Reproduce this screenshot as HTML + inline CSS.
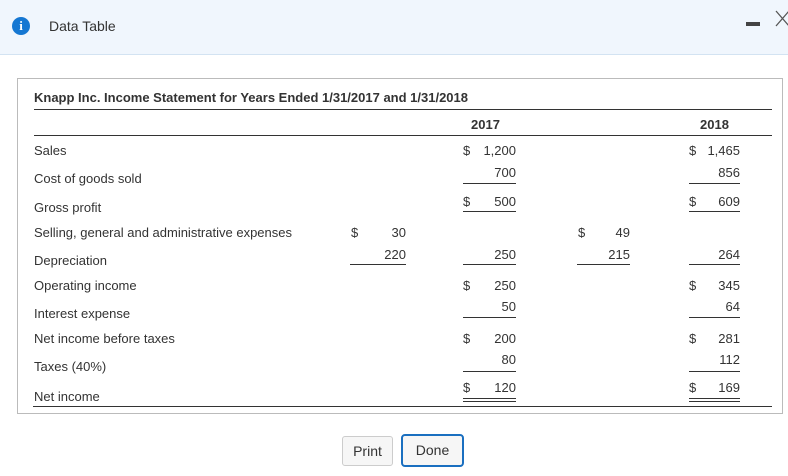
<!DOCTYPE html>
<html><head><style>
body{margin:0;width:788px;height:476px;background:#fff;font-family:"Liberation Sans",sans-serif;color:#333;position:relative;overflow:hidden}
.a{position:absolute;white-space:nowrap;font-size:13px;line-height:14px}
.r{text-align:right}
.l{position:absolute;height:1px;background:#333}
</style></head><body>
<div style="position:absolute;left:0;top:0;width:788px;height:54px;background:#f0f6fd;border-bottom:1px solid #d3e3f2"></div>
<div style="position:absolute;left:12px;top:17px;width:18px;height:18px;border-radius:50%;background:#1577d2;color:#fff;font:bold 13px/18px 'Liberation Serif',serif;text-align:center">i</div>
<div class="a" style="left:49px;top:18px;font-size:14px;line-height:16px">Data Table</div>
<div style="position:absolute;left:746px;top:22px;width:14px;height:4px;background:#444"></div>
<svg style="position:absolute;left:774px;top:10px" width="16" height="17"><path d="M2 1L15 16M15 1L2 16" stroke="#555" stroke-width="1.3" fill="none"/></svg>

<div style="position:absolute;left:17px;top:78px;width:764px;height:334px;border:1px solid #bbb"></div>
<div class="a" style="left:34px;top:91px;font-weight:bold">Knapp Inc. Income Statement for Years Ended 1/31/2017 and 1/31/2018</div>
<div class="l" style="left:34px;top:109px;width:738px"></div>
<div class="a" style="left:471px;top:118px;font-weight:bold">2017</div>
<div class="a" style="left:700px;top:118px;font-weight:bold">2018</div>
<div class="l" style="left:34px;top:135px;width:738px"></div>

<div class="a" style="left:34px;top:144px">Sales</div>
<div class="a" style="left:34px;top:172px">Cost of goods sold</div>
<div class="a" style="left:34px;top:201px">Gross profit</div>
<div class="a" style="left:34px;top:226px">Selling, general and administrative expenses</div>
<div class="a" style="left:34px;top:254px">Depreciation</div>
<div class="a" style="left:34px;top:279px">Operating income</div>
<div class="a" style="left:34px;top:307px">Interest expense</div>
<div class="a" style="left:34px;top:332px">Net income before taxes</div>
<div class="a" style="left:34px;top:360px">Taxes (40%)</div>
<div class="a" style="left:34px;top:390px">Net income</div>

<div class="a" style="left:463px;top:144px">$</div><div class="a r" style="left:465px;width:51px;top:144px">1,200</div>
<div class="a r" style="left:465px;width:51px;top:166px">700</div>
<div class="l" style="left:463px;top:183px;width:53px"></div>
<div class="a" style="left:463px;top:195px">$</div><div class="a r" style="left:465px;width:51px;top:195px">500</div>
<div class="l" style="left:463px;top:211px;width:53px"></div>
<div class="a r" style="left:465px;width:51px;top:248px">250</div>
<div class="l" style="left:463px;top:264px;width:53px"></div>
<div class="a" style="left:463px;top:279px">$</div><div class="a r" style="left:465px;width:51px;top:279px">250</div>
<div class="a r" style="left:465px;width:51px;top:300px">50</div>
<div class="l" style="left:463px;top:317px;width:53px"></div>
<div class="a" style="left:463px;top:332px">$</div><div class="a r" style="left:465px;width:51px;top:332px">200</div>
<div class="a r" style="left:465px;width:51px;top:353px">80</div>
<div class="l" style="left:463px;top:371px;width:53px"></div>
<div class="a" style="left:463px;top:381px">$</div><div class="a r" style="left:465px;width:51px;top:381px">120</div>
<div class="l" style="left:463px;top:398px;width:53px"></div><div class="l" style="left:463px;top:401px;width:53px"></div>

<div class="a" style="left:351px;top:226px">$</div><div class="a r" style="left:355px;width:51px;top:226px">30</div>
<div class="a r" style="left:355px;width:51px;top:248px">220</div>
<div class="l" style="left:350px;top:264px;width:56px"></div>
<div class="a" style="left:578px;top:226px">$</div><div class="a r" style="left:579px;width:51px;top:226px">49</div>
<div class="a r" style="left:579px;width:51px;top:248px">215</div>
<div class="l" style="left:577px;top:264px;width:53px"></div>

<div class="a" style="left:689px;top:144px">$</div><div class="a r" style="left:689px;width:51px;top:144px">1,465</div>
<div class="a r" style="left:689px;width:51px;top:166px">856</div>
<div class="l" style="left:689px;top:183px;width:51px"></div>
<div class="a" style="left:689px;top:195px">$</div><div class="a r" style="left:689px;width:51px;top:195px">609</div>
<div class="l" style="left:689px;top:211px;width:51px"></div>
<div class="a r" style="left:689px;width:51px;top:248px">264</div>
<div class="l" style="left:689px;top:264px;width:51px"></div>
<div class="a" style="left:689px;top:279px">$</div><div class="a r" style="left:689px;width:51px;top:279px">345</div>
<div class="a r" style="left:689px;width:51px;top:300px">64</div>
<div class="l" style="left:689px;top:317px;width:51px"></div>
<div class="a" style="left:689px;top:332px">$</div><div class="a r" style="left:689px;width:51px;top:332px">281</div>
<div class="a r" style="left:689px;width:51px;top:353px">112</div>
<div class="l" style="left:689px;top:371px;width:51px"></div>
<div class="a" style="left:689px;top:381px">$</div><div class="a r" style="left:689px;width:51px;top:381px">169</div>
<div class="l" style="left:689px;top:398px;width:51px"></div><div class="l" style="left:689px;top:401px;width:51px"></div>

<div class="l" style="left:33px;top:406px;width:739px"></div>

<div style="position:absolute;left:342px;top:436px;width:49px;height:28px;border:1px solid #ccc;border-radius:3px;background:#f6f6f6;font-size:14px;line-height:28px;text-align:center">Print</div>
<div style="position:absolute;left:401px;top:434px;width:59px;height:29px;border:2px solid #1a6fc0;border-radius:4px;background:#f6f6f6;font-size:14px;line-height:29px;text-align:center">Done</div>
</body></html>
